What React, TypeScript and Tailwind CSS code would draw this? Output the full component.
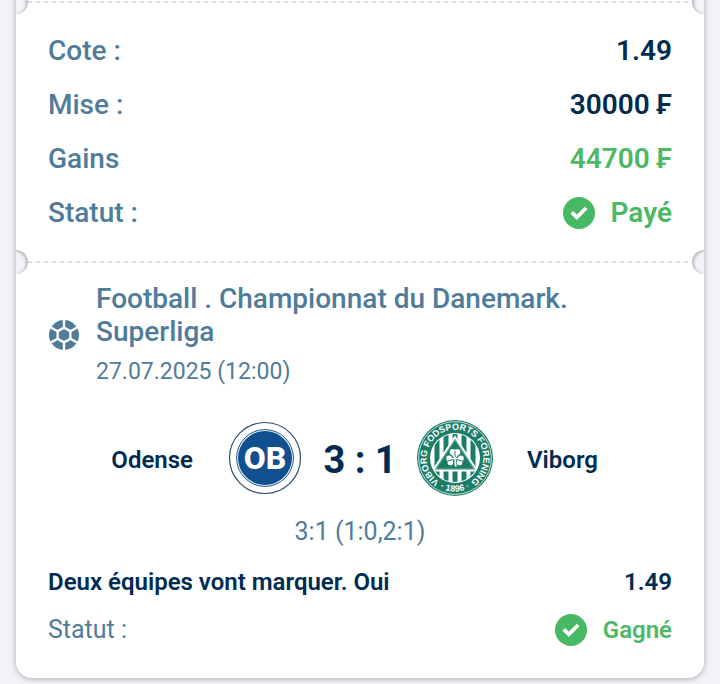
import { useId } from 'react'

const SUMMARY = [
  { label: 'Cote :', value: '1.49', color: 'text-[#002c52]' },
  { label: 'Mise :', value: '30000 ₣', color: 'text-[#002c52]' },
  { label: 'Gains', value: '44700 ₣', color: 'text-[#4db866]' },
]

function CheckBadge() {
  return (
    <svg className="size-8 shrink-0" viewBox="0 0 32 32" aria-hidden="true">
      <circle cx="16" cy="16" r="16" fill="#47b863" />
      <path d="M8.8 15.4l5 5L23.2 11" fill="none" stroke="#fff" strokeWidth="3.8" />
    </svg>
  )
}

function BallIcon() {
  return (
    <svg className="size-8 shrink-0" viewBox="-16 -16 32 32" aria-hidden="true">
      <circle r="15" fill="#507c9b" />
      <path
        d="M0-7.4L6.4-3.7V3.7L0 7.4L-6.4 3.7V-3.7ZM0-16V-7.4M6.4-3.7L14-8M6.4 3.7L14 8M0 7.4V16M-6.4 3.7L-14 8M-6.4-3.7L-14-8"
        fill="none"
        stroke="#fff"
        strokeWidth="2.4"
      />
    </svg>
  )
}

function OdenseLogo() {
  return (
    <svg className="size-20 shrink-0" viewBox="-40 -40 80 80" role="img" aria-label="Odense">
      <circle r="35.5" fill="#fff" stroke="#2c4c6e" strokeWidth="1.2" />
      <circle r="28.4" fill="#fff" stroke="#17518f" strokeWidth="1" />
      <circle r="27" fill="#11508f" />
      <text y="11" textAnchor="middle" fill="#fff" className="font-['Roboto',sans-serif] text-[32px] font-extrabold">
        OB
      </text>
    </svg>
  )
}

function ViborgLogo() {
  const id = useId()
  return (
    <svg className="size-20 shrink-0" viewBox="-40 -40 80 80" role="img" aria-label="Viborg">
      <defs>
        <path id={`${id}top`} d="M-15 24A28.3 28.3 0 1 1 15 24" />
        <path id={`${id}bottom`} d="M-20 27A33.6 33.6 0 0 0 20 27" />
        <clipPath id={`${id}clip`}>
          <circle r="24" />
        </clipPath>
      </defs>
      <circle r="38" fill="#1b7c67" />
      <circle r="36.4" fill="none" stroke="#d5ebe5" strokeWidth="0.9" />
      <circle r="25" fill="#fff" />
      <g clipPath={`url(#${id}clip)`}>
        <path d="M-18-26V26M-9-26V26M0-26V26M9-26V26M18-26V26" stroke="#1b7c67" strokeWidth="5" />
        <path d="M0-21L22 12.5H-22Z" fill="#1b7c67" stroke="#fff" strokeWidth="2" />
        <path d="M0-18L19 11H-19Z" fill="none" stroke="#a7d0c5" strokeWidth="0.6" />
      </g>
      <g fill="#fff">
        <circle cx="-2.4" cy="-6" r="3" />
        <circle cx="2.4" cy="-6" r="3" />
        <circle cx="-6" cy="0.2" r="2.8" />
        <circle cx="-4.6" cy="4.4" r="2.8" />
        <circle cx="6" cy="0.2" r="2.8" />
        <circle cx="4.6" cy="4.4" r="2.8" />
        <path d="M-4.6-4.5L0 1L4.6-4.5ZM-5 5L0 0.5L-5-1ZM5 5L0 0.5L5-1ZM-0.7 1H0.7L1.8 8.5H-0.2Z" />
      </g>
      <path d="M0-7V-1M-7 3L-1.5 1.4M7 3L1.5 1.4" fill="none" stroke="#1b7c67" strokeWidth="1" />
      <g fill="#fff" className="font-['Liberation_Sans',sans-serif] font-bold">
        <text textAnchor="middle" className="text-[9px]">
          <textPath href={`#${id}top`} startOffset="50%">
            VIBORG FODSPORTS FORENING
          </textPath>
        </text>
        <text textAnchor="middle" className="text-[9px]">
          <textPath href={`#${id}bottom`} startOffset="50%">
            · 1896 ·
          </textPath>
        </text>
      </g>
    </svg>
  )
}

// perforated edge between two parts of the ticket
function Perforation() {
  return (
    <div className="relative h-6 overflow-hidden">
      <svg className="absolute inset-x-3 top-1/2 h-0.5 w-[calc(100%-24px)] -translate-y-1/2" aria-hidden="true">
        <line x1="0" y1="1" x2="100%" y2="1" stroke="#dcdcdc" strokeWidth="2" strokeDasharray="4 4" />
      </svg>
      <span className="absolute -left-3 top-0 size-6 rounded-full bg-[#f3f4f9] shadow-[inset_-2px_1px_3px_#b9b9bd]" />
      <span className="absolute -right-3 top-0 size-6 rounded-full bg-[#f3f4f9] shadow-[inset_2px_1px_3px_#b9b9bd]" />
    </div>
  )
}

export default function App() {
  return (
    <div className="min-h-screen overflow-hidden bg-[#f3f4f9] px-4 pb-1 font-['Roboto',sans-serif] text-[#507c9b]">
      <main className="-mt-2.5 rounded-b-2xl bg-white shadow-[0_1px_6px_#a9abb4]">
        <Perforation />

        <dl className="px-8 pt-2.5 pb-2.5 text-[28px] leading-[54px] font-medium">
          {SUMMARY.map((row) => (
            <div key={row.label} className="flex justify-between">
              <dt>{row.label}</dt>
              <dd className={`font-semibold ${row.color}`}>{row.value}</dd>
            </div>
          ))}
          <div className="flex justify-between">
            <dt>Statut :</dt>
            <dd className="flex items-center gap-4 font-semibold text-[#4db866]">
              <CheckBadge />
              Payé
            </dd>
          </div>
        </dl>

        <Perforation />

        <section className="px-8 pt-2 pb-8">
          <header className="flex items-center gap-4">
            <BallIcon />
            <div>
              <h2 className="text-[28px] leading-[33px] font-medium">
                Football . Championnat du Danemark.
                <br />
                Superliga
              </h2>
              <p className="mt-2 text-[23px] leading-8">27.07.2025 (12:00)</p>
            </div>
          </header>

          <div className="mt-[30px] flex items-center justify-center text-2xl font-semibold text-[#002c52]">
            <span className="flex-1 pt-1 pr-8 text-right">Odense</span>
            <OdenseLogo />
            <span className="w-[110px] pt-1 text-center text-[38px] leading-none font-bold">3 : 1</span>
            <ViborgLogo />
            <span className="flex-1 pt-1 pl-8">Viborg</span>
          </div>
          <p className="mt-[18px] text-center text-[25px] leading-8">3:1 (1:0,2:1)</p>

          <div className="mt-[18px] flex justify-between text-2xl font-semibold text-[#002c52]">
            <span>Deux équipes vont marquer. Oui</span>
            <span>1.49</span>
          </div>
          <div className="mt-4 flex items-center justify-between">
            <span className="text-[25px] leading-8">Statut :</span>
            <span className="flex items-center gap-4 text-2xl font-semibold text-[#4db866]">
              <CheckBadge />
              Gagné
            </span>
          </div>
        </section>
      </main>
    </div>
  )
}
